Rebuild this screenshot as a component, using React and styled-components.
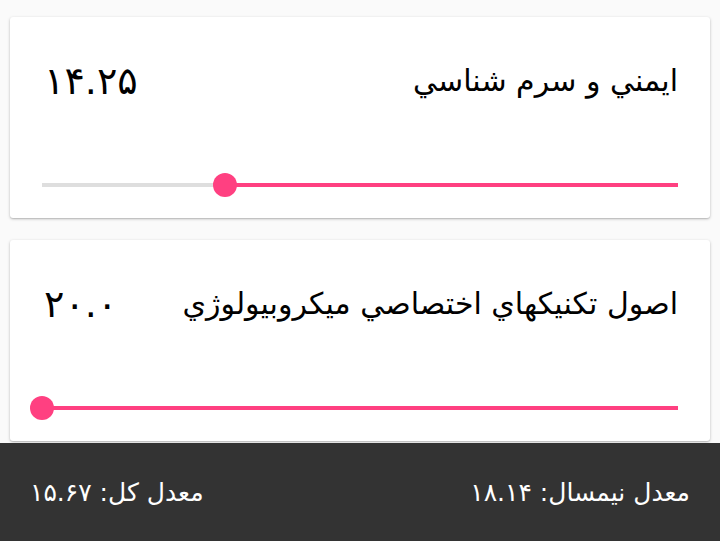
import React from "react";
import styled, { createGlobalStyle } from "styled-components";

const GlobalStyle = createGlobalStyle`
  html, body {
    margin: 0;
    padding: 0;
    background: #fafafa;
    font-family: "DejaVu Sans", "Noto Sans", sans-serif;
  }
`;

const courses = [
  { title: "ايمني و سرم شناسي", grade: 14.25 },
  { title: "اصول تكنيكهاي اختصاصي ميكروبيولوژي", grade: 20.0 },
];

const toFa = (n, digits) =>
  n.toFixed(digits).replace(/\d/g, (d) => "۰۱۲۳۴۵۶۷۸۹"[d]);

const App = () => {
  return (
    <>
      <GlobalStyle />
      <Screen>
        <List>
          {/* bottom edge of the card scrolled above */}
          <Card />
          {courses.map((c) => (
            <Card key={c.title}>
              <Header>
                <Title>{c.title}</Title>
                <Grade>{toFa(c.grade, c.grade === 20 ? 1 : 2)}</Grade>
              </Header>
              <Slider>
                <Track />
                <Fill style={{ width: `${(c.grade / 20) * 100}%` }} />
                <Thumb style={{ right: `${(c.grade / 20) * 100}%` }} />
              </Slider>
            </Card>
          ))}
        </List>
        <Footer>
          <Stat>معدل نيمسال: ۱۸.۱۴</Stat>
          <Stat>معدل كل: ۱۵.۶۷</Stat>
        </Footer>
      </Screen>
    </>
  );
};

export default App;

const Screen = styled.div`
  width: 720px;
  height: 541px;
  display: flex;
  flex-direction: column;
  overflow: hidden;
  direction: rtl;
`;

const List = styled.div`
  flex: 1;
  min-height: 0;
  overflow: hidden;
  display: flex;
  flex-direction: column;
  justify-content: flex-end;
  gap: 22px;
  padding: 0 10px 2px;
`;

const Card = styled.div`
  flex-shrink: 0;
  height: 201px;
  background: #fff;
  border-radius: 3px;
  box-shadow: 0 1px 3px rgba(0, 0, 0, 0.25), 0 1px 1px rgba(0, 0, 0, 0.08);
  padding: 0 32px;
  box-sizing: border-box;
  display: flex;
  flex-direction: column;
  justify-content: space-between;
`;

const Header = styled.div`
  display: flex;
  justify-content: space-between;
  align-items: center;
  padding-top: 44px;
  color: #000;
`;

const Title = styled.div`
  font-size: 30px;
  line-height: 40px;
`;

const Grade = styled.div`
  font-size: 38px;
  line-height: 40px;
  margin-left: 2px;
`;

const Slider = styled.div`
  position: relative;
  height: 24px;
  margin-bottom: 21px;
`;

const Track = styled.div`
  position: absolute;
  left: 0;
  right: 0;
  top: 10px;
  height: 4px;
  background: #dedede;
`;

const Fill = styled.div`
  position: absolute;
  right: 0;
  top: 10px;
  height: 4px;
  background: #ff4081;
`;

const Thumb = styled.div`
  position: absolute;
  top: 0;
  width: 24px;
  height: 24px;
  margin-right: -12px;
  border-radius: 50%;
  background: #ff4081;
`;

const Footer = styled.div`
  flex-shrink: 0;
  height: 98px;
  background: #333;
  display: flex;
  justify-content: space-between;
  align-items: center;
  padding: 0 30px;
`;

const Stat = styled.div`
  color: #fff;
  font-size: 25px;
`;
